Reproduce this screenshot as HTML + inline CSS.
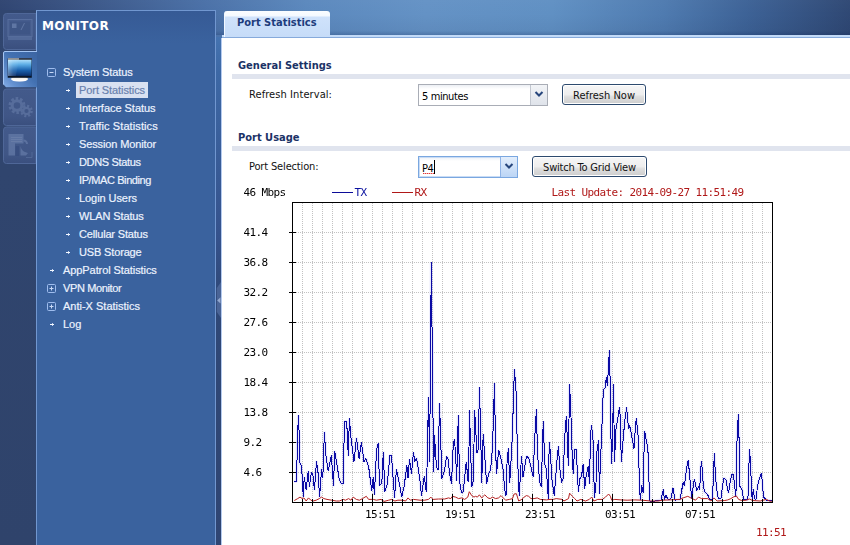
<!DOCTYPE html>
<html lang="en">
<head>
<meta charset="utf-8">
<title>Port Statistics</title>
<style>
*{box-sizing:border-box;margin:0;padding:0}
html,body{width:850px;height:545px;overflow:hidden}
body{position:relative;background:#2f4272;font-family:"DejaVu Sans Condensed","Liberation Sans",sans-serif;font-size:11px;color:#000}
.abs,.tico,.mi{position:absolute}
#hdr{left:0;top:0;width:850px;height:38px;background:linear-gradient(90deg,#2f4471 0%,#385282 8%,#4a70a7 24%,#5b88bd 36%,#6492c5 50%,#6090c3 65%,#4f7bb0 78%,#3d6296 88%,#2f4874 100%)}
#hdrshade{left:0;top:0;width:850px;height:35px;background:linear-gradient(180deg,rgba(255,255,255,.02) 0%,rgba(0,0,0,0) 40%,rgba(0,10,40,.05) 88%,rgba(0,20,70,.22) 100%)}
#leftcol{left:0;top:10px;width:37px;height:535px;background:linear-gradient(180deg,#31466f 0%,#30456e 30%,#2f436b 100%)}
#side{left:36px;top:10px;width:180px;height:540px;background:linear-gradient(180deg,#365a95 0%,#3a629e 6%,#3a629e 100%);border:1px solid #7197d0;border-bottom:0}
#gap{left:216px;top:37px;width:6px;height:508px;background:linear-gradient(180deg,#4573b0 0,#3d68a5 35px,#35528c 200px,#2f4877 260px,#2f4573 508px)}

#content{left:222px;top:38px;width:628px;height:507px;background:#fff;box-shadow:-1px 0 0 #b4caee}
#topline{left:222px;top:35px;width:628px;height:3px;background:linear-gradient(180deg,#c3dbf8 0,#c3dbf8 2px,#86aadb 2px)}
#tab{left:224px;top:11px;width:106px;height:26px;background:linear-gradient(180deg,#fbfdff 0,#f4f9ff 5px,#cfe2fb 6px,#c6dcf8 100%);border-radius:3px 3px 0 0;border-left:1px solid #f2f8ff;color:#1d3c7c;font:bold 11px "DejaVu Sans Condensed","Liberation Sans",sans-serif;padding:5px 0 0 12px;white-space:nowrap}
.h{left:238px;color:#1b3266;font:bold 11px "DejaVu Sans Condensed","Liberation Sans",sans-serif;white-space:nowrap}
.bar{left:232px;width:618px;height:5px;background:#e0e4ee}
.lbl{left:249px;font:11px "DejaVu Sans Condensed","Liberation Sans",sans-serif;color:#111;white-space:nowrap}
.sel1{border:1px solid #a9adb6;background:linear-gradient(180deg,#eceff4 0,#fff 4px);height:22px}
.sel1 span{position:absolute;left:3px;top:5px;letter-spacing:-0.4px;font:11px "DejaVu Sans Condensed","Liberation Sans",sans-serif;white-space:nowrap}
.dd{position:absolute;right:0;top:0;width:17px;height:20px;background:linear-gradient(180deg,#f2f4f7,#dfe3ea);border-left:1px solid #c2c7d0}
.btn{border:1px solid #2d4a6e;border-radius:3px;background:linear-gradient(180deg,#f6f6f6 0%,#eeeeee 50%,#dedede 62%,#cdcdcd 100%);height:21px;font:11px "DejaVu Sans Condensed","Liberation Sans",sans-serif;color:#111;text-align:center;white-space:nowrap;box-shadow:inset 0 0 0 1px #fff}
.mi{font:11px "Liberation Sans",sans-serif;color:#f0f5ff;-webkit-text-stroke:0.2px #e6eefc;height:18px;line-height:18px;white-space:nowrap}
.mi.sel{color:#667eab;-webkit-text-stroke:0.2px #7088b4}
#selbg{left:76px;top:82px;width:72px;height:16px;background:#d9e1f1}
#title{left:42px;top:19px;font:bold 12px "DejaVu Sans","Liberation Sans",sans-serif;letter-spacing:0.4px;color:#fff;white-space:nowrap}
.chart{position:absolute;left:0;top:0;will-change:transform}
.mono text{font:11px "DejaVu Sans Mono","Liberation Mono",monospace;letter-spacing:-0.62px;fill:#000}
.mono text.r{fill:#b01818}
.mono text.b{fill:#0a12a0}
</style>
</head>
<body>
<div id="hdr" class="abs"></div>
<div id="hdrshade" class="abs"></div>
<div id="leftcol" class="abs"></div>
<div id="side" class="abs"></div>
<svg class="abs" style="left:0;top:0" width="40" height="170" viewBox="0 0 40 170">
 <defs>
  <linearGradient id="scr" x1="0" y1="0" x2="0" y2="1"><stop offset="0" stop-color="#b4e2fc"/><stop offset=".3" stop-color="#5eaee6"/><stop offset=".65" stop-color="#1b62ae"/><stop offset="1" stop-color="#0a2f6c"/></linearGradient>
  <linearGradient id="scr2" x1="0" y1="0" x2="1" y2="0"><stop offset="0" stop-color="#fff" stop-opacity=".35"/><stop offset=".45" stop-color="#fff" stop-opacity=".12"/><stop offset="1" stop-color="#fff" stop-opacity="0"/></linearGradient>
  <linearGradient id="std" x1="0" y1="0" x2="0" y2="1"><stop offset="0" stop-color="#5a4a42"/><stop offset=".35" stop-color="#f3efe9"/><stop offset=".8" stop-color="#ffffff"/><stop offset="1" stop-color="#c9d3e6"/></linearGradient>
  <linearGradient id="act" x1="1" y1="0" x2="0" y2="1"><stop offset="0" stop-color="#3c65a3"/><stop offset=".45" stop-color="#4270b1"/><stop offset=".8" stop-color="#6390d0"/><stop offset="1" stop-color="#86aee6"/></linearGradient>
  <linearGradient id="ina" x1="0" y1="0" x2="0" y2="1"><stop offset="0" stop-color="#435a8b"/><stop offset=".75" stop-color="#405686"/><stop offset="1" stop-color="#3a4f7e"/></linearGradient>
 </defs>
 <!-- inactive tabs -->
 <path d="M36 13.500H6.500a3 3 0 0 0-3 3v30a3 3 0 0 0 3 3H36z" fill="url(#ina)" stroke="#4f6798"/>
 <path d="M36 89H6.500a3 3 0 0 0-3 3v30.500a3 3 0 0 0 3 3H36z" fill="url(#ina)" stroke="#4f6798"/>
 <path d="M36 127H6.500a3 3 0 0 0-3 3v30.500a3 3 0 0 0 3 3H36z" fill="url(#ina)" stroke="#4f6798"/>
 <path d="M36.500 10.500V52M36.500 88V170" stroke="#7da3dc" fill="none"/>
 <!-- active tab -->
 <path d="M37 51.500H5a1.500 1.500 0 0 0-1.500 1.500v31.500l2.500 2.800H37z" fill="url(#act)"/>
 <path d="M37 51.500H5a1.500 1.500 0 0 0-1.500 1.500v31.500" fill="none" stroke="#a3c4f3"/>
 <!-- icon 1: faded monitor -->
 <g opacity=".5">
  <rect x="8" y="19.500" width="24" height="17" fill="#4a6192" stroke="#6c84b2"/>
  <rect x="10" y="21.500" width="20" height="13" fill="#3d5585"/>
  <rect x="8" y="37" width="24" height="3" fill="#647cab"/>
  <path d="M12 23.500h4.500v4.500h-4.500z" fill="#7d94bf"/>
  <path d="M21 30l3.500-7" stroke="#7d94bf"/>
 </g>
 <!-- icon 2: active monitor -->
 <ellipse cx="19.500" cy="79" rx="8.500" ry="2.800" fill="url(#std)"/>
 <path d="M7.700 58.500h24.100v19.200h-24.100z" fill="#0a1628"/>
 <rect x="8" y="59.500" width="23.500" height="16.400" fill="url(#scr)"/>
 <path d="M8 59.500h11.300l-3.500 16.400H8z" fill="url(#scr2)"/>
 <rect x="8" y="58.300" width="11" height="1.200" fill="#b9b1a8"/>
 <rect x="19" y="58.300" width="13" height="1.200" fill="#3a3a42"/>
 <!-- icon 3: gears -->
 <g opacity=".34" fill="none" stroke="#8197c2">
  <circle cx="17" cy="105.500" r="6.500" stroke-width="4" stroke-dasharray="2.400 1.680"/>
  <circle cx="17" cy="105.500" r="4.800" stroke-width="3"/>
  <circle cx="26.500" cy="111" r="4.800" stroke-width="3" stroke-dasharray="1.900 1.870"/>
  <circle cx="26.500" cy="111" r="3.200" stroke-width="2.200"/>
 </g>
 <!-- icon 4: report -->
 <g opacity=".42">
  <path d="M8.500 134h15v9.500h-8.500v12h-6.500z" fill="#7f95c0"/>
  <path d="M11 137.500h11M11 139.500h11M11 141.500h11" stroke="#a3b5d6" stroke-width=".8"/>
  <path d="M15.500 146h3.500v10h-3.500z" fill="#30467a"/>
  <path d="M20.500 146c1 4 3 6 7.500 7l-2 2.500h-5.500z" fill="#7f95c0"/>
  <path d="M23.500 140.500a3.500 3.500 0 0 1 3.500 3.500" stroke="#7f95c0" fill="none" stroke-width="2"/>
  <path d="M32 152v5.500h-6" stroke="#6b82b0" fill="none"/>
 </g>
</svg>
<div id="title" class="abs">MONITOR</div>
<div id="selbg" class="abs"></div>
<svg class="tico" style="left:47px;top:68px" width="9" height="9" viewBox="0 0 9 9"><rect x=".5" y=".5" width="8" height="8" rx="1" fill="none" stroke="#9fbdee"/><path d="M2.5 4.5h4" stroke="#c8d9f6"/></svg><div class="mi" style="left:63px;top:63px;letter-spacing:-0.09px">System Status</div>
<svg class="tico" style="left:66px;top:88px" width="5" height="5" viewBox="0 0 5 5" shape-rendering="crispEdges"><path d="M2.5 1v3" stroke="#bfd0ee" stroke-width="1"/><path d="M0 2.5h4" stroke="#f4f8ff" stroke-width="1"/></svg><div class="mi sel" style="left:79px;top:81px;letter-spacing:-0.08px">Port Statistics</div>
<svg class="tico" style="left:66px;top:106px" width="5" height="5" viewBox="0 0 5 5" shape-rendering="crispEdges"><path d="M2.5 1v3" stroke="#bfd0ee" stroke-width="1"/><path d="M0 2.5h4" stroke="#f4f8ff" stroke-width="1"/></svg><div class="mi" style="left:79px;top:99px;letter-spacing:-0.03px">Interface Status</div>
<svg class="tico" style="left:66px;top:124px" width="5" height="5" viewBox="0 0 5 5" shape-rendering="crispEdges"><path d="M2.5 1v3" stroke="#bfd0ee" stroke-width="1"/><path d="M0 2.5h4" stroke="#f4f8ff" stroke-width="1"/></svg><div class="mi" style="left:79px;top:117px;letter-spacing:0.1px">Traffic Statistics</div>
<svg class="tico" style="left:66px;top:142px" width="5" height="5" viewBox="0 0 5 5" shape-rendering="crispEdges"><path d="M2.5 1v3" stroke="#bfd0ee" stroke-width="1"/><path d="M0 2.5h4" stroke="#f4f8ff" stroke-width="1"/></svg><div class="mi" style="left:79px;top:135px;letter-spacing:-0.13px">Session Monitor</div>
<svg class="tico" style="left:66px;top:160px" width="5" height="5" viewBox="0 0 5 5" shape-rendering="crispEdges"><path d="M2.5 1v3" stroke="#bfd0ee" stroke-width="1"/><path d="M0 2.5h4" stroke="#f4f8ff" stroke-width="1"/></svg><div class="mi" style="left:79px;top:153px;letter-spacing:-0.33px">DDNS Status</div>
<svg class="tico" style="left:66px;top:178px" width="5" height="5" viewBox="0 0 5 5" shape-rendering="crispEdges"><path d="M2.5 1v3" stroke="#bfd0ee" stroke-width="1"/><path d="M0 2.5h4" stroke="#f4f8ff" stroke-width="1"/></svg><div class="mi" style="left:79px;top:171px;letter-spacing:-0.4px">IP/MAC Binding</div>
<svg class="tico" style="left:66px;top:196px" width="5" height="5" viewBox="0 0 5 5" shape-rendering="crispEdges"><path d="M2.5 1v3" stroke="#bfd0ee" stroke-width="1"/><path d="M0 2.5h4" stroke="#f4f8ff" stroke-width="1"/></svg><div class="mi" style="left:79px;top:189px;letter-spacing:-0.07px">Login Users</div>
<svg class="tico" style="left:66px;top:214px" width="5" height="5" viewBox="0 0 5 5" shape-rendering="crispEdges"><path d="M2.5 1v3" stroke="#bfd0ee" stroke-width="1"/><path d="M0 2.5h4" stroke="#f4f8ff" stroke-width="1"/></svg><div class="mi" style="left:79px;top:207px;letter-spacing:-0.12px">WLAN Status</div>
<svg class="tico" style="left:66px;top:232px" width="5" height="5" viewBox="0 0 5 5" shape-rendering="crispEdges"><path d="M2.5 1v3" stroke="#bfd0ee" stroke-width="1"/><path d="M0 2.5h4" stroke="#f4f8ff" stroke-width="1"/></svg><div class="mi" style="left:79px;top:225px;letter-spacing:-0.18px">Cellular Status</div>
<svg class="tico" style="left:66px;top:250px" width="5" height="5" viewBox="0 0 5 5" shape-rendering="crispEdges"><path d="M2.5 1v3" stroke="#bfd0ee" stroke-width="1"/><path d="M0 2.5h4" stroke="#f4f8ff" stroke-width="1"/></svg><div class="mi" style="left:79px;top:243px;letter-spacing:-0.15px">USB Storage</div>
<svg class="tico" style="left:50px;top:268px" width="5" height="5" viewBox="0 0 5 5" shape-rendering="crispEdges"><path d="M2.5 1v3" stroke="#bfd0ee" stroke-width="1"/><path d="M0 2.5h4" stroke="#f4f8ff" stroke-width="1"/></svg><div class="mi" style="left:63px;top:261px;letter-spacing:-0.08px">AppPatrol Statistics</div>
<svg class="tico" style="left:47px;top:284px" width="9" height="9" viewBox="0 0 9 9"><rect x=".5" y=".5" width="8" height="8" rx="1" fill="none" stroke="#9fbdee"/><path d="M2.5 4.5h4M4.5 2.5v4" stroke="#c8d9f6"/></svg><div class="mi" style="left:63px;top:279px;letter-spacing:-0.37px">VPN Monitor</div>
<svg class="tico" style="left:47px;top:302px" width="9" height="9" viewBox="0 0 9 9"><rect x=".5" y=".5" width="8" height="8" rx="1" fill="none" stroke="#9fbdee"/><path d="M2.5 4.5h4M4.5 2.5v4" stroke="#c8d9f6"/></svg><div class="mi" style="left:63px;top:297px">Anti-X Statistics</div>
<svg class="tico" style="left:50px;top:322px" width="5" height="5" viewBox="0 0 5 5" shape-rendering="crispEdges"><path d="M2.5 1v3" stroke="#bfd0ee" stroke-width="1"/><path d="M0 2.5h4" stroke="#f4f8ff" stroke-width="1"/></svg><div class="mi" style="left:63px;top:315px">Log</div>
<div id="gap" class="abs"></div>
<svg class="abs" style="left:216px;top:280px" width="6" height="40" viewBox="0 0 6 40"><path d="M.8 8L5 2v36L.8 32z" fill="#4a6496"/><path d="M1.200 20.400L4.500 17.300v6.200z" fill="#93a8cf"/></svg>
<div id="content" class="abs"></div>
<div id="topline" class="abs"></div>
<div id="tab" class="abs">Port Statistics</div>

<div class="abs h" style="top:59px">General Settings</div>
<div class="abs bar" style="top:74px"></div>
<div class="abs lbl" style="top:88px;letter-spacing:0.08px">Refresh Interval:</div>
<div class="abs sel1" style="left:418px;top:84px;width:130px"><span>5 minutes</span><div class="dd"><svg width="16" height="20" viewBox="0 0 16 20"><path d="M4.500 7l3.500 3.500L11.500 7" fill="none" stroke="#27467c" stroke-width="2"/></svg></div></div>
<div class="abs btn" style="left:562px;top:84px;width:84px;line-height:21px">Refresh Now</div>

<div class="abs h" style="top:131px">Port Usage</div>
<div class="abs bar" style="top:146px"></div>
<div class="abs lbl" style="top:160px;letter-spacing:-0.15px">Port Selection:</div>
<div class="abs sel1" style="left:418px;top:156px;width:100px;border-color:#7aa7e0;box-shadow:0 0 0 1px #c9dcf5 inset"><span>P4</span><div class="abs" style="left:4px;top:16px;width:12px;height:1px;background:repeating-linear-gradient(90deg,#e03a3a 0,#e03a3a 1px,#f5b0b0 1px,#f5b0b0 2px)"></div><div class="abs" style="left:15px;top:3px;width:1px;height:14px;background:#000"></div><div class="dd" style="background:linear-gradient(180deg,#e3eefc,#bcd5f5);border-left-color:#8fb3e6"><svg width="16" height="20" viewBox="0 0 16 20"><path d="M4.500 7l3.500 3.500L11.500 7" fill="none" stroke="#27467c" stroke-width="2"/></svg></div></div>
<div class="abs btn" style="left:532px;top:156px;width:115px;line-height:21px;letter-spacing:-0.2px">Switch To Grid View</div>
<svg class="chart" width="850" height="545" viewBox="0 0 850 545" shape-rendering="crispEdges">
<path d="M302.5 203V502 M312.5 203V502 M322.5 203V502 M332.5 203V502 M342.5 203V502 M352.5 203V502 M362.5 203V502 M372.5 203V502 M382.5 203V502 M392.5 203V502 M402.5 203V502 M412.5 203V502 M422.5 203V502 M432.5 203V502 M442.5 203V502 M452.5 203V502 M462.5 203V502 M472.5 203V502 M482.5 203V502 M492.5 203V502 M502.5 203V502 M512.5 203V502 M522.5 203V502 M532.5 203V502 M542.5 203V502 M552.5 203V502 M562.5 203V502 M572.5 203V502 M582.5 203V502 M592.5 203V502 M602.5 203V502 M612.5 203V502 M622.5 203V502 M632.5 203V502 M642.5 203V502 M652.5 203V502 M662.5 203V502 M672.5 203V502 M682.5 203V502 M692.5 203V502 M702.5 203V502 M712.5 203V502 M722.5 203V502 M732.5 203V502 M742.5 203V502 M752.5 203V502 M762.5 203V502" stroke="#c2c2c2" stroke-width="1" stroke-dasharray="1 1" fill="none"/>
<path d="M294 232.5H772 M294 262.5H772 M294 292.5H772 M294 322.5H772 M294 352.5H772 M294 382.5H772 M294 412.5H772 M294 442.5H772 M294 472.5H772" stroke="#c2c2c2" stroke-width="1" stroke-dasharray="1 1" fill="none"/>
<polyline points="294.3,481.4 296.5,481.4 296.9,464.7 297.7,432.3 298.5,415.0 299.3,438.5 299.7,462.4 301.1,465.5 302.0,474.0 303.3,497.0 304.2,477.0 306.2,490.2 308.2,470.9 309.4,487.0 311.3,472.4 312.8,474.0 314.4,490.2 316.5,460.9 318.1,473.2 319.6,497.1 321.6,468.6 322.8,477.8 323.6,455.5 324.4,431.6 325.8,454.7 328.2,470.9 331.3,455.5 333.5,486.3 334.7,450.8 336.3,460.9 339.3,479.4 341.7,484.0 343.2,483.2 343.7,453.2 344.7,421.5 346.7,421.5 348.3,456.2 349.4,418.3 350.9,437.0 354.0,461.6 356.5,437.7 359.1,458.6 361.4,442.4 364.0,461.6 365.9,458.6 368.6,466.3 371.7,490.9 373.3,477.0 374.4,494.8 376.0,461.6 377.1,447.0 378.4,443.1 379.4,485.5 381.8,483.2 383.3,451.6 384.8,491.7 387.2,484.8 389.9,455.5 391.5,455.5 393.0,477.0 394.6,497.9 396.4,469.3 398.7,480.1 401.8,497.1 404.1,486.3 406.9,465.5 408.0,477.8 409.5,459.3 411.5,474.0 413.4,452.4 414.9,461.6 416.5,457.8 418.8,472.4 420.0,481.0 421.5,495.6 424.3,476.3 426.2,491.7 427.0,467.8 428.5,397.0 429.6,462.4 431.3,262.0 433.6,472.4 434.6,434.6 435.4,452.4 436.7,467.8 438.2,470.1 438.8,438.5 439.4,403.0 440.4,427.7 441.3,460.1 441.9,478.6 444.4,470.9 446.5,456.2 448.1,459.3 449.6,474.0 451.6,484.0 452.7,453.2 454.2,439.3 455.5,450.8 456.7,480.9 457.8,433.1 458.4,415.0 458.9,449.3 459.8,483.2 461.6,493.2 463.2,491.7 466.3,461.6 468.1,481.7 469.0,447.8 469.5,410.0 470.1,430.8 471.7,487.1 473.2,481.7 474.0,445.4 474.3,410.0 475.5,421.5 476.7,453.2 478.3,449.3 479.4,387.0 480.4,420.0 481.7,483.2 483.2,433.9 484.8,457.0 486.6,484.0 488.6,474.0 490.6,469.3 492.5,447.8 494.5,383.0 495.6,450.8 496.6,474.0 498.6,450.0 501.0,458.6 503.3,470.9 504.5,487.8 506.0,496.3 507.1,460.9 508.4,448.5 509.7,483.2 511.8,447.8 512.8,420.0 514.4,369.0 516.4,396.3 516.8,426.0 517.9,466.3 519.2,496.3 521.5,456.2 523.0,477.0 526.4,456.2 528.7,457.8 533.3,477.0 534.4,443.1 536.4,409.0 537.5,453.2 539.5,480.9 541.4,487.1 542.6,438.5 543.4,421.0 544.6,463.2 546.4,469.3 548.3,498.6 549.2,441.6 550.3,452.0 552.0,480.0 554.3,495.6 556.2,470.9 557.4,454.7 558.5,446.2 559.6,466.3 561.6,482.5 563.1,478.6 564.2,450.8 565.4,424.6 566.5,416.3 567.7,452.4 568.5,465.5 569.4,384.3 570.5,401.7 571.6,435.4 572.4,463.2 573.4,474.0 574.4,449.3 576.5,450.0 577.4,477.0 578.5,491.7 579.6,479.4 581.6,475.5 583.2,464.0 584.7,488.6 586.2,475.5 588.2,466.3 589.5,484.0 590.4,440.0 591.3,425.4 592.9,435.4 594.4,497.9 595.9,486.3 597.0,450.8 598.6,440.0 599.3,494.0 600.6,458.6 601.7,433.1 602.7,403.2 603.5,389.3 605.2,388.0 606.3,377.0 607.4,386.3 608.3,370.0 609.4,350.0 610.1,379.3 611.4,464.0 612.5,443.1 613.5,384.0 614.5,461.6 616.0,429.3 617.8,418.6 619.4,407.1 620.6,421.0 621.2,462.4 623.2,438.5 624.8,420.8 626.6,407.1 628.6,429.3 629.7,425.4 634.0,448.5 635.6,424.6 636.4,418.3 638.2,437.0 639.1,470.9 640.2,500.0 641.8,485.5 643.3,493.2 643.8,461.6 644.5,430.8 647.9,448.5 648.7,476.3 650.0,501.0 655.0,501.0 661.0,500.0 663.3,489.4 664.4,500.0 666.0,495.6 668.4,500.0 671.0,498.0 673.1,487.8 674.9,500.2 680.0,499.4 681.6,490.9 683.1,482.5 684.4,486.3 686.5,469.3 687.4,463.2 688.4,460.1 689.3,472.4 690.8,489.4 691.9,498.6 693.2,486.3 694.2,479.4 695.5,483.2 696.7,490.9 698.6,486.3 699.8,489.4 700.4,470.9 701.6,460.9 702.9,480.1 704.3,491.7 706.3,493.2 708.1,495.6 709.7,499.4 712.4,499.4 713.4,477.8 714.3,453.2 715.5,477.0 716.7,489.4 718.3,498.6 720.9,498.6 722.5,486.3 724.0,477.8 726.0,480.1 727.5,488.6 728.6,493.2 730.2,481.7 731.7,474.7 733.3,474.0 734.3,481.7 735.9,497.1 737.1,437.0 738.3,414.0 739.4,450.0 739.9,486.3 741.7,488.6 743.6,499.4 747.9,499.4 748.7,474.7 749.4,449.3 750.7,463.2 751.3,487.8 752.2,499.4 753.3,489.4 754.4,497.9 755.9,500.2 757.5,486.3 759.0,480.1 761.5,473.2 762.5,484.8 763.6,497.1 766.4,500.2 771.8,501.0" fill="none" stroke-linejoin="bevel" stroke="#2222ee" stroke-width="3" opacity=".11" shape-rendering="geometricPrecision"/>
<polyline points="294.3,481.4 296.5,481.4 296.9,464.7 297.7,432.3 298.5,415.0 299.3,438.5 299.7,462.4 301.1,465.5 302.0,474.0 303.3,497.0 304.2,477.0 306.2,490.2 308.2,470.9 309.4,487.0 311.3,472.4 312.8,474.0 314.4,490.2 316.5,460.9 318.1,473.2 319.6,497.1 321.6,468.6 322.8,477.8 323.6,455.5 324.4,431.6 325.8,454.7 328.2,470.9 331.3,455.5 333.5,486.3 334.7,450.8 336.3,460.9 339.3,479.4 341.7,484.0 343.2,483.2 343.7,453.2 344.7,421.5 346.7,421.5 348.3,456.2 349.4,418.3 350.9,437.0 354.0,461.6 356.5,437.7 359.1,458.6 361.4,442.4 364.0,461.6 365.9,458.6 368.6,466.3 371.7,490.9 373.3,477.0 374.4,494.8 376.0,461.6 377.1,447.0 378.4,443.1 379.4,485.5 381.8,483.2 383.3,451.6 384.8,491.7 387.2,484.8 389.9,455.5 391.5,455.5 393.0,477.0 394.6,497.9 396.4,469.3 398.7,480.1 401.8,497.1 404.1,486.3 406.9,465.5 408.0,477.8 409.5,459.3 411.5,474.0 413.4,452.4 414.9,461.6 416.5,457.8 418.8,472.4 420.0,481.0 421.5,495.6 424.3,476.3 426.2,491.7 427.0,467.8 428.5,397.0 429.6,462.4 431.3,262.0 433.6,472.4 434.6,434.6 435.4,452.4 436.7,467.8 438.2,470.1 438.8,438.5 439.4,403.0 440.4,427.7 441.3,460.1 441.9,478.6 444.4,470.9 446.5,456.2 448.1,459.3 449.6,474.0 451.6,484.0 452.7,453.2 454.2,439.3 455.5,450.8 456.7,480.9 457.8,433.1 458.4,415.0 458.9,449.3 459.8,483.2 461.6,493.2 463.2,491.7 466.3,461.6 468.1,481.7 469.0,447.8 469.5,410.0 470.1,430.8 471.7,487.1 473.2,481.7 474.0,445.4 474.3,410.0 475.5,421.5 476.7,453.2 478.3,449.3 479.4,387.0 480.4,420.0 481.7,483.2 483.2,433.9 484.8,457.0 486.6,484.0 488.6,474.0 490.6,469.3 492.5,447.8 494.5,383.0 495.6,450.8 496.6,474.0 498.6,450.0 501.0,458.6 503.3,470.9 504.5,487.8 506.0,496.3 507.1,460.9 508.4,448.5 509.7,483.2 511.8,447.8 512.8,420.0 514.4,369.0 516.4,396.3 516.8,426.0 517.9,466.3 519.2,496.3 521.5,456.2 523.0,477.0 526.4,456.2 528.7,457.8 533.3,477.0 534.4,443.1 536.4,409.0 537.5,453.2 539.5,480.9 541.4,487.1 542.6,438.5 543.4,421.0 544.6,463.2 546.4,469.3 548.3,498.6 549.2,441.6 550.3,452.0 552.0,480.0 554.3,495.6 556.2,470.9 557.4,454.7 558.5,446.2 559.6,466.3 561.6,482.5 563.1,478.6 564.2,450.8 565.4,424.6 566.5,416.3 567.7,452.4 568.5,465.5 569.4,384.3 570.5,401.7 571.6,435.4 572.4,463.2 573.4,474.0 574.4,449.3 576.5,450.0 577.4,477.0 578.5,491.7 579.6,479.4 581.6,475.5 583.2,464.0 584.7,488.6 586.2,475.5 588.2,466.3 589.5,484.0 590.4,440.0 591.3,425.4 592.9,435.4 594.4,497.9 595.9,486.3 597.0,450.8 598.6,440.0 599.3,494.0 600.6,458.6 601.7,433.1 602.7,403.2 603.5,389.3 605.2,388.0 606.3,377.0 607.4,386.3 608.3,370.0 609.4,350.0 610.1,379.3 611.4,464.0 612.5,443.1 613.5,384.0 614.5,461.6 616.0,429.3 617.8,418.6 619.4,407.1 620.6,421.0 621.2,462.4 623.2,438.5 624.8,420.8 626.6,407.1 628.6,429.3 629.7,425.4 634.0,448.5 635.6,424.6 636.4,418.3 638.2,437.0 639.1,470.9 640.2,500.0 641.8,485.5 643.3,493.2 643.8,461.6 644.5,430.8 647.9,448.5 648.7,476.3 650.0,501.0 655.0,501.0 661.0,500.0 663.3,489.4 664.4,500.0 666.0,495.6 668.4,500.0 671.0,498.0 673.1,487.8 674.9,500.2 680.0,499.4 681.6,490.9 683.1,482.5 684.4,486.3 686.5,469.3 687.4,463.2 688.4,460.1 689.3,472.4 690.8,489.4 691.9,498.6 693.2,486.3 694.2,479.4 695.5,483.2 696.7,490.9 698.6,486.3 699.8,489.4 700.4,470.9 701.6,460.9 702.9,480.1 704.3,491.7 706.3,493.2 708.1,495.6 709.7,499.4 712.4,499.4 713.4,477.8 714.3,453.2 715.5,477.0 716.7,489.4 718.3,498.6 720.9,498.6 722.5,486.3 724.0,477.8 726.0,480.1 727.5,488.6 728.6,493.2 730.2,481.7 731.7,474.7 733.3,474.0 734.3,481.7 735.9,497.1 737.1,437.0 738.3,414.0 739.4,450.0 739.9,486.3 741.7,488.6 743.6,499.4 747.9,499.4 748.7,474.7 749.4,449.3 750.7,463.2 751.3,487.8 752.2,499.4 753.3,489.4 754.4,497.9 755.9,500.2 757.5,486.3 759.0,480.1 761.5,473.2 762.5,484.8 763.6,497.1 766.4,500.2 771.8,501.0" fill="none" stroke-linejoin="bevel" stroke="#0a0aa4" stroke-width="1" shape-rendering="crispEdges"/>
<polyline points="294.3,500.5 297.7,498.6 300.0,497.1 302.3,498.6 303.9,497.9 306.2,501.0 308.5,497.9 310.8,500.2 313.1,501.0 316.2,500.2 319.3,498.6 321.6,497.1 323.9,498.6 327.0,499.4 331.6,500.2 336.3,501.0 339.3,501.0 343.2,499.4 345.5,500.2 348.6,498.6 350.9,500.2 353.2,497.1 356.3,499.4 359.4,500.2 362.5,498.6 366.3,496.3 368.6,499.4 373.3,499.4 376.4,500.2 381.0,499.4 384.1,501.4 388.7,500.2 391.8,499.4 394.9,501.0 397.9,500.2 402.6,500.2 405.6,501.0 408.0,497.9 410.3,500.2 413.4,499.4 420.0,500.2 424.6,500.2 428.5,499.4 430.8,497.1 433.1,499.4 438.5,499.0 444.7,499.0 448.5,497.9 450.8,498.6 452.4,496.3 455.5,497.1 458.6,498.6 461.6,497.9 464.7,499.4 467.8,497.1 469.3,491.7 471.7,495.6 474.0,497.1 475.5,496.3 477.4,497.1 479.4,494.8 481.7,497.9 484.8,494.8 487.8,497.9 490.2,498.6 492.5,497.1 495.6,498.6 498.6,497.9 501.0,495.6 503.3,497.9 505.6,500.2 509.4,499.4 512.5,498.6 514.1,494.0 516.4,493.7 518.7,501.0 521.8,499.4 524.1,497.1 526.4,495.6 528.7,496.3 531.0,498.6 534.1,498.6 537.2,497.9 540.3,499.4 546.4,499.9 550.0,499.4 553.1,499.4 556.2,498.6 562.3,499.4 563.9,501.0 567.0,499.4 568.5,498.6 569.6,493.2 572.4,496.3 574.7,498.6 577.0,501.0 580.8,499.4 585.5,501.0 589.3,499.4 591.6,497.1 593.9,501.0 597.8,499.4 602.4,499.4 605.5,497.1 608.6,494.0 610.4,496.3 611.7,500.2 614.8,499.4 620.9,499.9 627.1,500.2 634.8,499.9 642.5,500.2 650.2,501.0 657.9,501.0 662.6,500.2 680.0,499.4 683.1,497.9 687.8,496.3 690.8,497.9 695.5,500.2 698.5,497.1 701.6,498.6 707.8,498.6 710.9,501.0 714.0,497.9 717.1,501.0 724.8,500.5 727.8,499.9 730.9,498.6 733.2,497.1 736.3,495.9 738.6,499.4 741.7,500.5 746.4,500.2 749.4,499.0 752.5,500.5 760.2,501.0 766.4,499.4 769.5,501.0 771.8,501.4" fill="none" stroke="#b42020" stroke-width="1" shape-rendering="geometricPrecision" stroke-linejoin="round"/>
<path d="M292.5 202V503M292 202.5H773M772.5 202V503M292 502.5H773" stroke="#000" stroke-width="1" fill="none"/>
<path d="M289 232.5H296 M289 262.5H296 M289 292.5H296 M289 322.5H296 M289 352.5H296 M289 382.5H296 M289 412.5H296 M289 442.5H296 M289 472.5H296 M302.5 499V506 M312.5 499V506 M322.5 499V506 M332.5 499V506 M342.5 499V506 M352.5 499V506 M362.5 499V506 M372.5 494V506 M382.5 499V506 M392.5 499V506 M402.5 499V506 M412.5 499V506 M422.5 499V506 M432.5 499V506 M442.5 499V506 M452.5 494V506 M462.5 499V506 M472.5 499V506 M482.5 499V506 M492.5 499V506 M502.5 499V506 M512.5 499V506 M522.5 499V506 M532.5 494V506 M542.5 499V506 M552.5 499V506 M562.5 499V506 M572.5 499V506 M582.5 499V506 M592.5 499V506 M602.5 499V506 M612.5 494V506 M622.5 499V506 M632.5 499V506 M642.5 499V506 M652.5 499V506 M662.5 499V506 M672.5 499V506 M682.5 499V506 M692.5 494V506 M702.5 499V506 M712.5 499V506 M722.5 499V506 M732.5 499V506 M742.5 499V506 M752.5 499V506 M762.5 499V506" stroke="#000" stroke-width="1" fill="none"/>
<path d="M332 192.5H353" stroke="#0c0c98" stroke-width="1"/>
<path d="M392 192.5H413" stroke="#b01818" stroke-width="1"/>
<g class="mono" shape-rendering="auto">
<text x="243.5" y="196">46 Mbps</text>
<text x="243.5" y="236">41.4</text>
<text x="243.5" y="266">36.8</text>
<text x="243.5" y="296">32.2</text>
<text x="243.5" y="326">27.6</text>
<text x="243.5" y="356">23.0</text>
<text x="243.5" y="386">18.4</text>
<text x="243.5" y="416">13.8</text>
<text x="243.5" y="446">9.2</text>
<text x="243.5" y="476">4.6</text>
<text x="365" y="518">15:51</text>
<text x="445" y="518">19:51</text>
<text x="525" y="518">23:51</text>
<text x="605" y="518">03:51</text>
<text x="685" y="518">07:51</text>
<text x="354.5" y="196" class="b">TX</text>
<text x="414.5" y="196" class="r">RX</text>
<text x="551.5" y="196" class="r">Last Update: 2014-09-27 11:51:49</text>
<text x="756" y="536" class="r">11:51</text>
</g>
</svg>
</body>
</html>
